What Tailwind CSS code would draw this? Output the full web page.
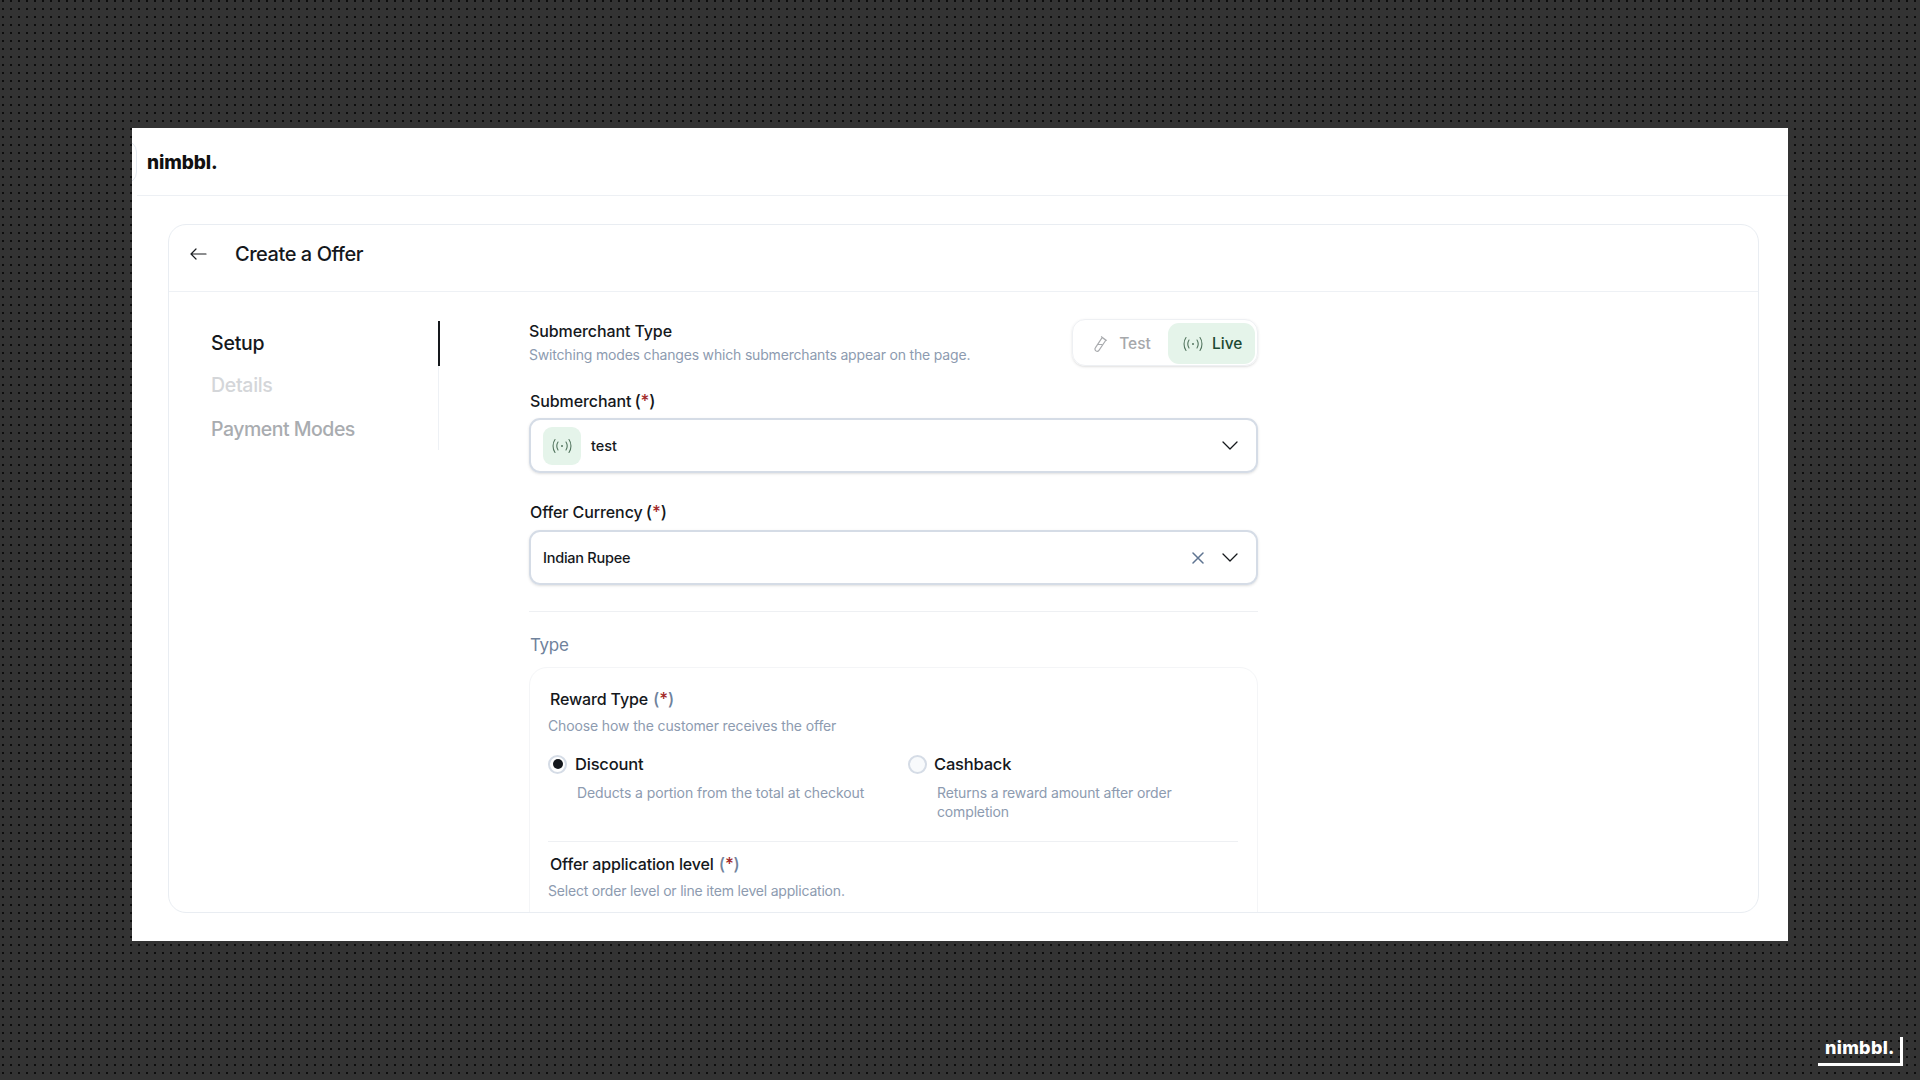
<!DOCTYPE html>
<html lang="en">
<head>
  <meta charset="UTF-8" />
  <title>Create a Offer</title>
  <script src="https://cdn.jsdelivr.net/npm/@tailwindcss/browser@4"></script>
</head>
<body class="font-['Inter',sans-serif] text-[#15181c]">
  <div class="relative h-[1080px] w-[1920px] overflow-hidden bg-[#333333] bg-[radial-gradient(circle,#0d0d0d_1.1px,transparent_1.4px)] bg-[size:8px_8px] bg-[position:-1px_-3px] pt-[128px] pl-[132px]">

    <div class="h-[813px] w-[1656px] bg-white overflow-hidden flex flex-col">
      <!-- top bar -->
      <div class="relative h-[68px] ml-[5px] border-b border-[#edf0f4] flex items-center pl-[10px] pt-[3px]">
        <span class="text-[19px] font-extrabold tracking-[-0.1px] text-[#111]">nimbbl.</span>
        <div class="absolute -left-[23px] top-[12px] h-[44px] w-[23px] rounded-r-xl border border-[#e4e9f0]"></div>
      </div>

      <!-- card -->
      <div class="ml-[36px] mr-[29px] mt-[28px] h-[689px] rounded-[18px] border-[1.5px] border-[#e9edf2] overflow-hidden flex flex-col">
        <div class="h-[67px] shrink-0 border-b-[1.5px] border-[#eef1f5] flex items-center pl-[20px] pb-[8px]">
          <svg class="w-[18px] h-[14px] mr-[28px]" viewBox="0 0 18 14" fill="none" stroke="#1a1d21" stroke-width="1.2" stroke-linecap="round" stroke-linejoin="round"><path d="M17 7H2M7 2 2 7l5 5"/></svg>
          <h1 class="text-[20px] font-[450] tracking-[-0.45px]">Create a Offer</h1>
        </div>

        <div class="flex flex-1 min-h-0">
          <!-- steps -->
          <div class="w-[270px] shrink-0 pt-[29px] pl-[42px]">
            <div class="border-r-[1.5px] border-[#eef1f5] h-[129px] flex flex-col relative pt-[2px]">
              <span class="absolute -right-[2px] top-0 h-[45px] w-[2.5px] bg-[#15181c]"></span>
              <div class="h-[43px] flex items-center text-[19.5px] font-[450] tracking-[-0.2px]">Setup</div>
              <div class="h-[43px] flex items-center text-[19.5px] font-[450] tracking-[-0.3px] text-[#d4d6d9]">Details</div>
              <div class="mt-[2px] h-[43px] flex items-center text-[19.5px] font-[450] tracking-[-0.5px] text-[#a9acb0]">Payment Modes</div>
            </div>
          </div>

          <!-- form -->
          <div class="ml-[90px] w-[729px] pt-[27px]">
            <div class="flex items-start justify-between h-[47px]">
              <div class="-mt-[1px]">
                <div class="text-[16px] font-[450] leading-[26px] tracking-[-0.1px]">Submerchant Type</div>
                <div class="mt-[1px] text-[14px] leading-[20px] tracking-[-0.18px] text-[#8d9bb0]">Switching modes changes which submerchants appear on the page.</div>
              </div>
              <div class="h-[47px] w-[186px] rounded-[13px] border-[1.5px] border-[#eef0f3] shadow-sm flex items-center p-[2px]">
                <div class="flex-1 flex items-center justify-center gap-[11px] pt-[3px] text-[15.5px] font-[450] text-[#a6a8ab]">
                  <svg class="w-[16px] h-[18px]" viewBox="0 0 15 17" fill="none" stroke="#a9abae" stroke-width="1.1" stroke-linejoin="round"><path d="M9.5 2.5 13 5 6.5 14.5a2 2 0 0 1-3.4-2.4L9.5 2.5ZM8.5 1.5l5.5 3.8M5.5 9h4"/></svg>
                  <span>Test</span>
                </div>
                <div class="mt-[1px] w-[87px] h-[41px] rounded-[11px] bg-[#e5f4ea] flex items-center gap-[9px] pl-[15px] pt-[2px] text-[15.5px] font-[450] text-[#1d4a34]">
                  <svg class="w-[20px] h-[16px]" viewBox="0 0 20 16" fill="none" stroke="#53755f" stroke-width="1.1" stroke-linecap="round"><path d="M3 1.5c-2.6 3.6-2.6 9.4 0 13M6 4c-1.4 2.3-1.4 5.7 0 8M14 4c1.4 2.3 1.4 5.7 0 8M17 1.5c2.6 3.6 2.6 9.4 0 13"/><circle cx="10" cy="8" r="1" fill="#53755f" stroke="none"/></svg>
                  <span>Live</span>
                </div>
              </div>
            </div>

            <div class="mt-[23px] pl-[1px] text-[16px] font-[450] leading-[24px] tracking-[-0.1px]">Submerchant <span class="-ml-[1px] text-[17px]">(<span class="text-[#a32a2a]">*</span>)</span></div>
            <div class="mt-[5px] h-[55px] rounded-[11px] border-2 border-[#d5dce6] shadow-sm flex items-center pl-[12px] pr-[18px]">
              <div class="w-[38px] h-[38px] rounded-[9px] bg-[#e5f4ea] flex items-center justify-center">
                <svg class="w-[20px] h-[16px]" viewBox="0 0 20 16" fill="none" stroke="#53755f" stroke-width="1.1" stroke-linecap="round"><path d="M3 1.5c-2.6 3.6-2.6 9.4 0 13M6 4c-1.4 2.3-1.4 5.7 0 8M14 4c1.4 2.3 1.4 5.7 0 8M17 1.5c2.6 3.6 2.6 9.4 0 13"/><circle cx="10" cy="8" r="1" fill="#53755f" stroke="none"/></svg>
              </div>
              <span class="ml-[10px] text-[14.5px] font-[450]">test</span>
              <svg class="ml-auto w-[16px] h-[9px]" viewBox="0 0 16 9" fill="none" stroke="#15181c" stroke-width="1.3" stroke-linecap="round" stroke-linejoin="round"><path d="m1 1 7 7 7-7"/></svg>
            </div>

            <div class="mt-[27px] pl-[1px] text-[16px] font-[450] leading-[24px] tracking-[-0.1px]">Offer Currency <span class="-ml-[1px] text-[17px]">(<span class="text-[#a32a2a]">*</span>)</span></div>
            <div class="mt-[6px] h-[55px] rounded-[11px] border-2 border-[#d5dce6] shadow-sm flex items-center pl-[12px] pr-[18px]">
              <span class="text-[14.5px] font-[450] tracking-[-0.25px]">Indian Rupee</span>
              <svg class="ml-auto w-[12px] h-[12px]" viewBox="0 0 12 12" fill="none" stroke="#5f7491" stroke-width="1.5" stroke-linecap="round"><path d="m1 1 10 10M11 1 1 11"/></svg>
              <svg class="ml-[18px] w-[16px] h-[9px]" viewBox="0 0 16 9" fill="none" stroke="#15181c" stroke-width="1.3" stroke-linecap="round" stroke-linejoin="round"><path d="m1 1 7 7 7-7"/></svg>
            </div>

            <div class="mt-[26px] border-t-[1.5px] border-[#eef0f3]"></div>
            <div class="mt-[21px] pl-[1px] text-[17px] leading-[24px] tracking-[-0.3px] text-[#6f829c]">Type</div>

            <div class="mt-[10px] h-[300px] rounded-t-[18px] border border-[#f4f5f7] pl-[18px] pr-[19px] pt-[19px]">
              <div class="pl-[2px] text-[16px] font-[450] leading-[24px] tracking-[-0.15px]">Reward Type <span class="ml-[1px] text-[17px] text-[#6f829c]">(<span class="text-[#a32a2a]">*</span>)</span></div>
              <div class="mt-[5px] text-[14px] leading-[20px] tracking-[-0.13px] text-[#8d9bb0]">Choose how the customer receives the offer</div>

              <div class="mt-[16px] flex">
                <div class="w-[360px]">
                  <div class="flex items-center gap-[8px] h-[24px]">
                    <span class="w-[19px] h-[19px] rounded-full border-2 border-[#d5dce6] flex items-center justify-center"><span class="w-[10px] h-[10px] rounded-full bg-[#15181c]"></span></span>
                    <span class="text-[16.5px] font-[450] tracking-[-0.2px]">Discount</span>
                  </div>
                  <div class="mt-[7px] pl-[29px] text-[14px] leading-[19px] tracking-[-0.1px] text-[#8d9bb0]">Deducts a portion from the total at checkout</div>
                </div>
                <div class="flex-1">
                  <div class="flex items-center gap-[7px] h-[24px]">
                    <span class="w-[19px] h-[19px] rounded-full border-2 border-[#d5dce6] bg-[#f8fafc]"></span>
                    <span class="text-[16.5px] font-[450] tracking-[-0.2px]">Cashback</span>
                  </div>
                  <div class="mt-[7px] pl-[29px] text-[14px] leading-[19px] tracking-[-0.15px] text-[#8d9bb0]">Returns a reward amount after order<br>completion</div>
                </div>
              </div>

              <div class="mt-[20px] border-t-[1.5px] border-[#eef0f3]"></div>
              <div class="mt-[10px] pl-[2px] text-[16px] font-[450] leading-[24px] tracking-[-0.15px]">Offer application level <span class="ml-[1px] text-[17px] text-[#6f829c]">(<span class="text-[#a32a2a]">*</span>)</span></div>
              <div class="mt-[5px] text-[14px] leading-[20px] tracking-[-0.2px] text-[#8d9bb0]">Select order level or line item level application.</div>
            </div>
          </div>
        </div>
      </div>
    </div>

    <!-- corner mark -->
    <div class="absolute left-[1818px] top-[1037px] w-[85px] h-[29px] border-b-[3px] border-r-[3px] border-white pl-[7px]">
      <span class="block text-[18px] leading-[22px] font-extrabold tracking-[0.3px] text-white">nimbbl.</span>
    </div>
  </div>
</body>
</html>
